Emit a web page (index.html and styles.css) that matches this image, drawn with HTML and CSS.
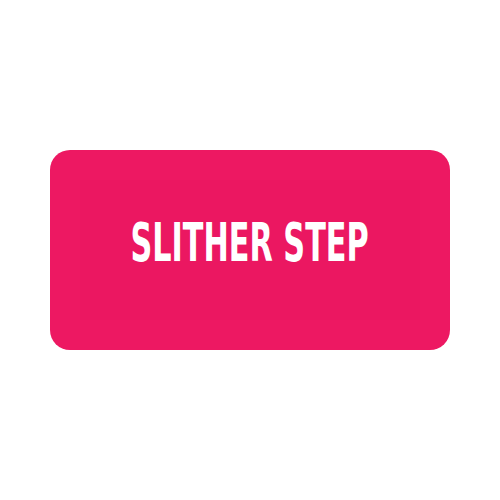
FILE: index.html
```html
<!DOCTYPE html>
<html>
<head>
<meta charset="utf-8">
<link rel="stylesheet" href="styles.css">
</head>
<body>
<div class="stage">
  <div class="card">
    <div class="inner">
      <span class="label">SLITHER STEP</span>
    </div>
  </div>
</div>
</body>
</html>
```
FILE: styles.css
```css
html, body {
  margin: 0;
  padding: 0;
  background: #ffffff;
}
.stage {
  width: 500px;
  height: 500px;
  display: flex;
  align-items: center;
  justify-content: center;
}
.card {
  width: 400px;
  height: 200px;
  box-sizing: border-box;
  padding: 30px;
  border-radius: 20px;
  background: #ed1862;
  display: flex;
}
.inner {
  flex: 1;
  min-width: 0;
  background: #eb1761;
  display: flex;
  align-items: center;
  justify-content: center;
}
.label {
  flex: none;
  font-family: "DejaVu Sans Condensed", "DejaVu Sans", sans-serif;
  font-weight: bold;
  font-size: 53px;
  line-height: 1;
  color: #ffffff;
  transform: scaleX(0.635);
  white-space: nowrap;
  margin-top: -15px;
}
```
